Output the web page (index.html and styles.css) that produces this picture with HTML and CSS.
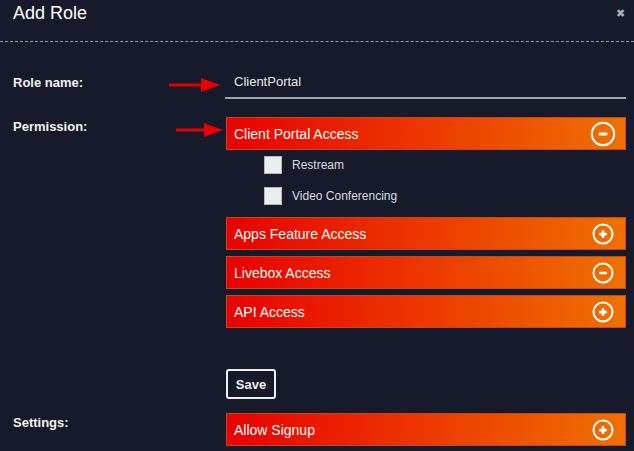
FILE: index.html
```html
<!DOCTYPE html>
<html>
<head>
<meta charset="utf-8">
<link rel="stylesheet" href="styles.css">
</head>
<body>
<div class="modal">
  <div class="header">
    <h1 class="title">Add Role</h1>
    <span class="close">&#x2716;</span>
  </div>
  <div class="form">
    <div class="label label-name">Role name:</div>
    <div class="field">
      <svg class="arrow arrow-name" width="52" height="16" viewBox="0 0 52 16"><line x1="0" y1="8" x2="34" y2="8" stroke="#e80000" stroke-width="3"/><polygon points="32,1 51,8 32,15" fill="#e80000"/></svg>
      <div class="input">ClientPortal</div>
    </div>

    <div class="label label-perm label-first">Permission:</div>
    <div class="field perms">
      <svg class="arrow arrow-perm" width="48" height="16" viewBox="0 0 48 16"><line x1="0" y1="8" x2="30" y2="8" stroke="#e80000" stroke-width="3"/><polygon points="28,1 47,8 28,15" fill="#e80000"/></svg>
      <div class="bar"><span>Client Portal Access</span>
        <svg class="icon" width="26" height="26" viewBox="0 0 26 26"><circle cx="13" cy="13" r="11.2" fill="none" stroke="#fff" stroke-width="2"/><rect x="8.5" y="11.5" width="9" height="3" rx="1" fill="#fff"/></svg>
      </div>
      <div class="checks">
        <div class="check"><span class="box"></span><span>Restream</span></div>
        <div class="check"><span class="box"></span><span>Video Conferencing</span></div>
      </div>
      <div class="bar"><span>Apps Feature Access</span>
        <svg class="icon" width="26" height="26" viewBox="0 0 26 26"><circle cx="13" cy="13" r="9.5" fill="none" stroke="#fff" stroke-width="2"/><rect x="9" y="11.8" width="8" height="2.6" rx="1" fill="#fff"/><rect x="11.7" y="9" width="2.6" height="8" rx="1" fill="#fff"/></svg>
      </div>
      <div class="bar"><span>Livebox Access</span>
        <svg class="icon" width="26" height="26" viewBox="0 0 26 26"><circle cx="13" cy="13" r="9.5" fill="none" stroke="#fff" stroke-width="2"/><rect x="9" y="11.7" width="8" height="2.6" rx="1" fill="#fff"/></svg>
      </div>
      <div class="bar"><span>API Access</span>
        <svg class="icon" width="26" height="26" viewBox="0 0 26 26"><circle cx="13" cy="13" r="9.5" fill="none" stroke="#fff" stroke-width="2"/><rect x="9" y="11.8" width="8" height="2.6" rx="1" fill="#fff"/><rect x="11.7" y="9" width="2.6" height="8" rx="1" fill="#fff"/></svg>
      </div>
      <button class="save">Save</button>
    </div>

    <div class="label label-perm">Settings:</div>
    <div class="field">
      <div class="bar"><span>Allow Signup</span>
        <svg class="icon" width="26" height="26" viewBox="0 0 26 26"><circle cx="13" cy="13" r="9.5" fill="none" stroke="#fff" stroke-width="2"/><rect x="9" y="11.8" width="8" height="2.6" rx="1" fill="#fff"/><rect x="11.7" y="9" width="2.6" height="8" rx="1" fill="#fff"/></svg>
      </div>
    </div>
  </div>
</div>
</body>
</html>
```
FILE: styles.css
```css
html, body {
  margin: 0;
  padding: 0;
  background: #171a2a;
  font-family: "Liberation Sans", Arial, sans-serif;
  color: #fff;
}
.modal {
  width: 634px;
  height: 451px;
  overflow: hidden;
}
.header {
  height: 41px;
  border-bottom: 1px dashed #9a9aa0;
  display: flex;
  justify-content: space-between;
  align-items: flex-start;
  padding: 0 9px 0 13px;
}
.title {
  margin: 0;
  padding-top: 2px;
  font-size: 18px;
  font-weight: normal;
  line-height: 22px;
  color: #fff;
}
.close {
  font-size: 11px;
  color: #b0b0b4;
  padding-top: 7px;
}
.form {
  display: grid;
  grid-template-columns: 213px 400px;
  padding-left: 13px;
  padding-top: 25px;
}
.label {
  font-size: 13px;
  font-weight: bold;
  color: #f2f2f2;
  line-height: 16px;
}
.label-name {
  align-self: center;
}
.label-perm {
  padding-top: 2px;
}
.label-first {
  padding-top: 20px;
}
.field {
  position: relative;
}
.arrow {
  position: absolute;
}
.arrow-name {
  left: -57px;
  top: 10px;
}
.arrow-perm {
  left: -50px;
  top: 23px;
}
.input {
  height: 30px;
  line-height: 30px;
  padding-left: 9px;
  font-size: 13px;
  color: #e8e8ec;
  border-bottom: 2px solid #a4a4ac;
  margin-left: -1px;
}
.perms {
  padding-top: 18px;
  display: flex;
  flex-direction: column;
}
.bar {
  height: 33px;
  box-sizing: border-box;
  background: linear-gradient(to right, #e90000, #ef7100);
  border: 1px solid #c84a10;
  display: flex;
  align-items: center;
  justify-content: space-between;
  padding: 0 9px 0 7px;
  font-size: 14px;
  color: #fff;
  margin-bottom: 6px;
}
.checks {
  display: flex;
  flex-direction: column;
  gap: 13px;
  padding: 6px 0 12px 38px;
  margin-top: -6px;
}
.check {
  display: flex;
  align-items: center;
  gap: 10px;
  font-size: 12px;
  color: #dcdce0;
  height: 18px;
}
.box {
  width: 18px;
  height: 18px;
  box-sizing: border-box;
  background: #ededed;
  border: 1px solid #b8b8b8;
}
.save {
  align-self: flex-start;
  margin-top: 35px;
  margin-bottom: 14px;
  width: 50px;
  height: 30px;
  background: transparent;
  border: 2px solid #f0f0f0;
  border-radius: 3px;
  color: #f0f0f0;
  font-family: "Liberation Sans", Arial, sans-serif;
  font-weight: bold;
  font-size: 13px;
  padding: 0;
}
```
